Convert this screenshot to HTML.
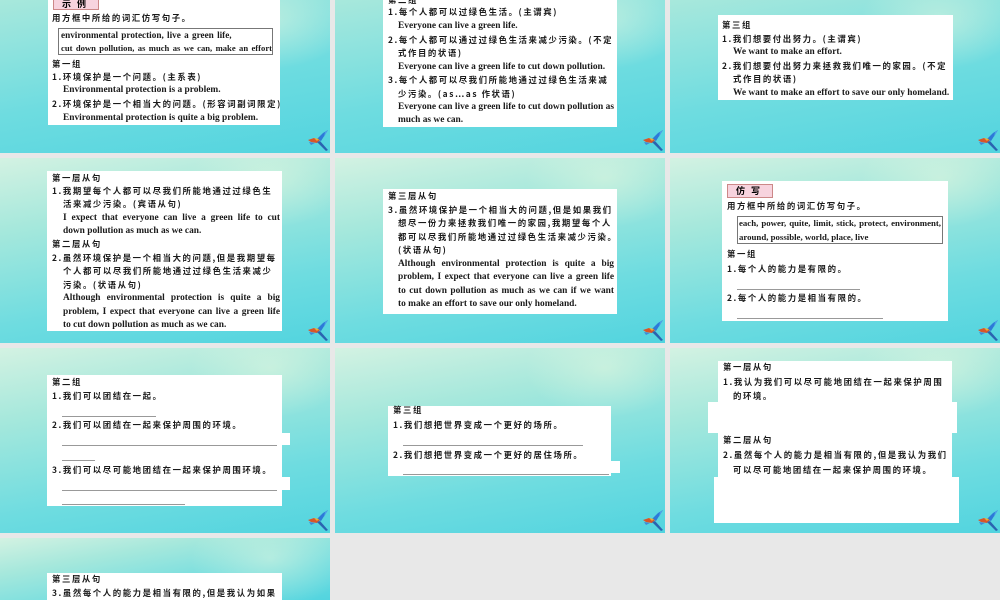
<!DOCTYPE html>
<html style="width:1000px;height:600px;overflow:hidden"><head><meta charset="utf-8"><style>
*{margin:0;padding:0;box-sizing:border-box}
body{width:1000px;height:600px;overflow:hidden;background:#e8e8e8;position:relative;font-family:"Liberation Serif","Noto Serif CJK SC",serif}
.s{position:absolute;width:330px;height:185px;background:linear-gradient(170deg,#d3f2e2 0%,#a6e8dc 30%,#6edce0 70%,#52d4df 100%);overflow:hidden}
.s::after{content:"";position:absolute;right:-20px;top:-30px;width:160px;height:100px;background:radial-gradient(ellipse,rgba(230,248,225,.5),rgba(230,248,225,0) 70%)}
.top{top:0;height:153px;background:linear-gradient(170deg,#a8e8dc 0%,#6edce0 55%,#52d4df 100%)}
.w{position:absolute;background:#fff}
.t{position:absolute;font-size:9.4px;line-height:12px;color:#1a1a1a;white-space:nowrap;font-weight:bold}
.c{font-family:"Noto Sans CJK SC",sans-serif;font-weight:bold;letter-spacing:1.6px;font-size:8.4px}
.j{text-align:justify;text-align-last:justify;white-space:normal}
.l{position:absolute;height:1px;background:#999}
.bx{position:absolute;border:1px solid #777}
.k{font-size:9.2px;word-spacing:1px}
.lab{position:absolute;background:#f7d3de;border:1px solid #c88;font-family:"Noto Sans CJK SC",sans-serif;font-weight:bold;font-size:9px;line-height:12px;letter-spacing:6px;padding-left:8px}
.b{position:absolute;width:24px;height:24px}
</style></head><body>

<div class="s top" style="left:0"></div>
<div class="s top" style="left:335px"></div>
<div class="s top" style="left:670px"></div>
<div class="s" style="left:0;top:158px"></div>
<div class="s" style="left:335px;top:158px"></div>
<div class="s" style="left:670px;top:158px"></div>
<div class="s" style="left:0;top:348px"></div>
<div class="s" style="left:335px;top:348px"></div>
<div class="s" style="left:670px;top:348px"></div>
<div class="s" style="left:0;top:538px;height:62px"></div>

<svg width="0" height="0" style="position:absolute"><defs><g id="bird"><path d="M22 1 L17 4 L11 10 L15 12 Z" fill="#2d7ad8"/><path d="M19 3 L22 1 L18 8 Z" fill="#4fa0e8"/><path d="M2 11 L8 9 L14 11 L11 14 L5 13 Z" fill="#d8552a"/><path d="M8 9 L13 10 L11 12 Z" fill="#e9b030"/><path d="M11 13 L20 22 L22 21 L14 12 Z" fill="#2a64b0"/><path d="M3 13 L9 14 L5 16 Z" fill="#3f8ad8"/></g></defs></svg>
<svg class="b" style="left:306px;top:129px" viewBox="0 0 24 24"><use href="#bird"/></svg>
<svg class="b" style="left:641px;top:129px" viewBox="0 0 24 24"><use href="#bird"/></svg>
<svg class="b" style="left:976px;top:129px" viewBox="0 0 24 24"><use href="#bird"/></svg>
<svg class="b" style="left:306px;top:319px" viewBox="0 0 24 24"><use href="#bird"/></svg>
<svg class="b" style="left:641px;top:319px" viewBox="0 0 24 24"><use href="#bird"/></svg>
<svg class="b" style="left:976px;top:319px" viewBox="0 0 24 24"><use href="#bird"/></svg>
<svg class="b" style="left:306px;top:509px" viewBox="0 0 24 24"><use href="#bird"/></svg>
<svg class="b" style="left:641px;top:509px" viewBox="0 0 24 24"><use href="#bird"/></svg>
<svg class="b" style="left:976px;top:509px" viewBox="0 0 24 24"><use href="#bird"/></svg>

<!-- slide 1 -->
<div class="w" style="left:48px;top:0;width:232px;height:125px"></div>
<div class="lab" style="left:53px;top:-3px;width:46px;height:13px">示例</div>
<div class="t c" style="left:52px;top:12px">用方框中所给的词汇仿写句子。</div>
<div class="bx" style="left:58px;top:28px;width:215px;height:27px"></div>
<div class="t k" style="left:61px;top:29px">environmental protection, live a green life,</div>
<div class="t k j" style="left:61px;top:42px;width:211px;font-size:8.6px">cut down pollution, as much as we can, make an effort</div>
<div class="t c" style="left:52px;top:58px">第一组</div>
<div class="t c" style="left:52px;top:71px">1.环境保护是一个问题。(主系表)</div>
<div class="t" style="left:63px;top:84px">Environmental protection is a problem.</div>
<div class="t c" style="left:52px;top:98px">2.环境保护是一个相当大的问题。(形容词副词限定)</div>
<div class="t" style="left:63px;top:112px">Environmental protection is quite a big problem.</div>

<!-- slide 2 -->
<div class="w" style="left:383px;top:0;width:234px;height:127px"></div>
<div class="t c" style="left:388px;top:-6px">第二组</div>
<div class="t c" style="left:388px;top:6px">1.每个人都可以过绿色生活。(主谓宾)</div>
<div class="t" style="left:398px;top:20px">Everyone can live a green life.</div>
<div class="t c" style="left:388px;top:34px">2.每个人都可以通过过绿色生活来减少污染。(不定</div>
<div class="t c" style="left:398px;top:47px">式作目的状语)</div>
<div class="t" style="left:398px;top:61px">Everyone can live a green life to cut down pollution.</div>
<div class="t c" style="left:388px;top:74px">3.每个人都可以尽我们所能地通过过绿色生活来减</div>
<div class="t c" style="left:398px;top:88px">少污染。(as…as 作状语)</div>
<div class="t j" style="left:398px;top:101px;width:216px">Everyone can live a green life to cut down pollution as</div>
<div class="t" style="left:398px;top:114px">much as we can.</div>

<!-- slide 3 -->
<div class="w" style="left:718px;top:15px;width:235px;height:85px"></div>
<div class="t c" style="left:722px;top:19px">第三组</div>
<div class="t c" style="left:722px;top:33px">1.我们想要付出努力。(主谓宾)</div>
<div class="t" style="left:733px;top:46px">We want to make an effort.</div>
<div class="t c" style="left:722px;top:60px">2.我们想要付出努力来拯救我们唯一的家园。(不定</div>
<div class="t c" style="left:733px;top:73px">式作目的状语)</div>
<div class="t" style="left:733px;top:87px">We want to make an effort to save our only homeland.</div>

<!-- slide 4 -->
<div class="w" style="left:47px;top:171px;width:235px;height:160px"></div>
<div class="t c" style="left:52px;top:172px">第一层从句</div>
<div class="t c" style="left:52px;top:185px">1.我期望每个人都可以尽我们所能地通过过绿色生</div>
<div class="t c" style="left:63px;top:198px">活来减少污染。(宾语从句)</div>
<div class="t j" style="left:63px;top:212px;width:217px">I expect that everyone can live a green life to cut</div>
<div class="t" style="left:63px;top:225px">down pollution as much as we can.</div>
<div class="t c" style="left:52px;top:238px">第二层从句</div>
<div class="t c" style="left:52px;top:252px">2.虽然环境保护是一个相当大的问题,但是我期望每</div>
<div class="t c" style="left:63px;top:265px">个人都可以尽我们所能地通过过绿色生活来减少</div>
<div class="t c" style="left:63px;top:279px">污染。(状语从句)</div>
<div class="t j" style="left:63px;top:292px;width:217px">Although environmental protection is quite a big</div>
<div class="t j" style="left:63px;top:306px;width:217px">problem, I expect that everyone can live a green life</div>
<div class="t" style="left:63px;top:319px">to cut down pollution as much as we can.</div>

<!-- slide 5 -->
<div class="w" style="left:383px;top:189px;width:234px;height:125px"></div>
<div class="t c" style="left:388px;top:190px">第三层从句</div>
<div class="t c" style="left:388px;top:204px">3.虽然环境保护是一个相当大的问题,但是如果我们</div>
<div class="t c" style="left:398px;top:217px">想尽一份力来拯救我们唯一的家园,我期望每个人</div>
<div class="t c" style="left:398px;top:231px">都可以尽我们所能地通过过绿色生活来减少污染。</div>
<div class="t c" style="left:398px;top:244px">(状语从句)</div>
<div class="t j" style="left:398px;top:258px;width:216px">Although environmental protection is quite a big</div>
<div class="t j" style="left:398px;top:271px;width:216px">problem, I expect that everyone can live a green life</div>
<div class="t j" style="left:398px;top:285px;width:216px">to cut down pollution as much as we can if we want</div>
<div class="t" style="left:398px;top:298px">to make an effort to save our only homeland.</div>

<!-- slide 6 -->
<div class="w" style="left:722px;top:181px;width:226px;height:140px"></div>
<div class="lab" style="left:727px;top:184px;width:46px;height:14px">仿写</div>
<div class="t c" style="left:727px;top:200px">用方框中所给的词汇仿写句子。</div>
<div class="bx" style="left:737px;top:216px;width:206px;height:28px"></div>
<div class="t k j" style="left:739px;top:217px;width:202px;font-size:8.8px;word-spacing:0">each, power, quite, limit, stick, protect, environment,</div>
<div class="t k" style="left:739px;top:231px;font-size:8.8px;word-spacing:0">around, possible, world, place, live</div>
<div class="t c" style="left:727px;top:248px">第一组</div>
<div class="t c" style="left:727px;top:263px">1.每个人的能力是有限的。</div>
<div class="l" style="left:737px;top:289px;width:123px"></div>
<div class="t c" style="left:727px;top:292px">2.每个人的能力是相当有限的。</div>
<div class="l" style="left:737px;top:318px;width:146px"></div>

<!-- slide 7 -->
<div class="w" style="left:47px;top:375px;width:235px;height:131px"></div>
<div class="w" style="left:280px;top:433px;width:10px;height:12px"></div>
<div class="w" style="left:280px;top:477px;width:10px;height:13px"></div>
<div class="t c" style="left:52px;top:376px">第二组</div>
<div class="t c" style="left:52px;top:390px">1.我们可以团结在一起。</div>
<div class="l" style="left:62px;top:416px;width:94px"></div>
<div class="t c" style="left:52px;top:419px">2.我们可以团结在一起来保护周围的环境。</div>
<div class="l" style="left:62px;top:445px;width:215px"></div>
<div class="l" style="left:62px;top:460px;width:33px"></div>
<div class="t c" style="left:52px;top:464px">3.我们可以尽可能地团结在一起来保护周围环境。</div>
<div class="l" style="left:62px;top:490px;width:215px"></div>
<div class="l" style="left:62px;top:504px;width:123px"></div>

<!-- slide 8 -->
<div class="w" style="left:388px;top:406px;width:223px;height:70px"></div>
<div class="w" style="left:609px;top:461px;width:11px;height:12px"></div>
<div class="t c" style="left:393px;top:404px">第三组</div>
<div class="t c" style="left:393px;top:419px">1.我们想把世界变成一个更好的场所。</div>
<div class="l" style="left:403px;top:445px;width:180px"></div>
<div class="t c" style="left:393px;top:449px">2.我们想把世界变成一个更好的居住场所。</div>
<div class="l" style="left:403px;top:474px;width:206px"></div>

<!-- slide 9 -->
<div class="w" style="left:718px;top:361px;width:234px;height:116px"></div>
<div class="w" style="left:708px;top:402px;width:249px;height:31px"></div>
<div class="w" style="left:714px;top:477px;width:245px;height:46px"></div>
<div class="t c" style="left:723px;top:361px">第一层从句</div>
<div class="t c" style="left:723px;top:376px">1.我认为我们可以尽可能地团结在一起来保护周围</div>
<div class="t c" style="left:733px;top:390px">的环境。</div>
<div class="t c" style="left:723px;top:434px">第二层从句</div>
<div class="t c" style="left:723px;top:449px">2.虽然每个人的能力是相当有限的,但是我认为我们</div>
<div class="t c" style="left:733px;top:464px">可以尽可能地团结在一起来保护周围的环境。</div>

<!-- slide 10 -->
<div class="w" style="left:47px;top:573px;width:235px;height:27px"></div>
<div class="t c" style="left:52px;top:573px">第三层从句</div>
<div class="t c" style="left:52px;top:587px;line-height:12px">3.虽然每个人的能力是相当有限的,但是我认为如果</div>

</body></html>
